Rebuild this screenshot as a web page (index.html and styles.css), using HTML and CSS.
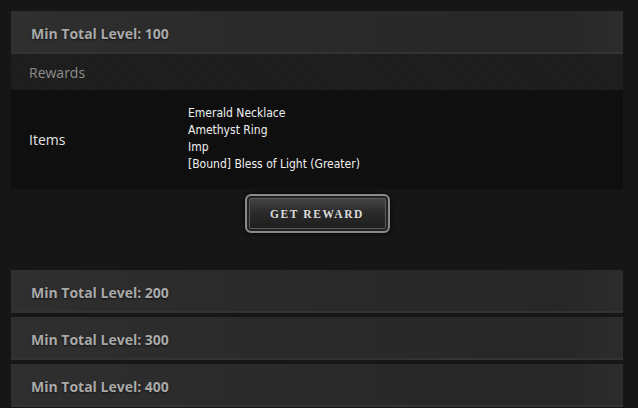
FILE: index.html
```html
<!DOCTYPE html>
<html lang="en">
<head>
    <meta charset="UTF-8">
    <title>Rewards</title>
    <link rel="stylesheet" href="styles.css">
</head>
<body>
    <div class="list">
        <div class="tier">
            <div class="tier-head">Min Total Level: 100</div>
            <div class="tier-sub">Rewards</div>
            <div class="tier-items">
                <div class="items-label">Items</div>
                <ul class="items-list">
                    <li>Emerald Necklace</li>
                    <li>Amethyst Ring</li>
                    <li>Imp</li>
                    <li>[Bound] Bless of Light (Greater)</li>
                </ul>
            </div>
            <div class="tier-action">
                <button class="btn-reward">Get Reward</button>
            </div>
        </div>

        <div class="tier">
            <div class="tier-head">Min Total Level: 200</div>
        </div>
        <div class="tier">
            <div class="tier-head">Min Total Level: 300</div>
        </div>
        <div class="tier">
            <div class="tier-head">Min Total Level: 400</div>
        </div>
    </div>
</body>
</html>
```

FILE: styles.css
```css
* {
    margin: 0;
    padding: 0;
    box-sizing: border-box;
}

body {
    background-color: #161616;
    font-family: 'Open Sans', sans-serif;
    padding: 11px 15px 0 11px;
}

.list {
    display: flex;
    flex-direction: column;
    gap: 4px;
}

.tier-head {
    height: 43px;
    padding: 4px 20px 0;
    display: flex;
    align-items: center;
    font-size: 14px;
    font-weight: 700;
    color: #a9a9a9;
    text-shadow: 0 1px 2px rgba(0, 0, 0, 0.6);
    background: linear-gradient(90deg, #2f2f2f 0%, #2a2a2a 40%, #272727 90%, #2c2c2c 100%);
    border-bottom: 2px solid #333;
}

.tier-sub {
    height: 36px;
    padding: 0 18px;
    display: flex;
    align-items: center;
    font-size: 14px;
    color: #8e8e8e;
    background-color: #1c1c1c;
    background-image: repeating-linear-gradient(45deg, rgba(255, 255, 255, 0.025) 0 1px, transparent 1px 3px);
}

.tier-items {
    display: flex;
    align-items: center;
    background-color: #0f0f0f;
    height: 99px;
}

.items-label {
    width: 177px;
    padding-left: 18px;
    font-size: 14px;
    color: #e6e6e6;
}

.items-list {
    list-style: none;
    font-family: 'DejaVu Sans Condensed', 'DejaVu Sans', sans-serif;
    font-size: 12px;
    line-height: 17px;
    color: #f0f0f0;
    margin-top: -2px;
}

.tier-action {
    display: flex;
    justify-content: center;
    padding: 5px 0 33px;
}

.btn-reward {
    width: 145px;
    height: 39px;
    font-family: 'Liberation Serif', serif;
    font-size: 11.5px;
    font-weight: 700;
    letter-spacing: 1.6px;
    text-transform: uppercase;
    color: #dcdcdc;
    background: linear-gradient(180deg, #4a4a4a 0%, #2b2b2b 45%, #1c1c1c 100%);
    border: 2px solid #8a8a8a;
    border-radius: 6px;
    box-shadow: inset 0 0 0 2px #222, inset 0 0 0 3px #5a5a5a, 0 0 4px rgba(0, 0, 0, 0.9);
    cursor: pointer;
}
```
